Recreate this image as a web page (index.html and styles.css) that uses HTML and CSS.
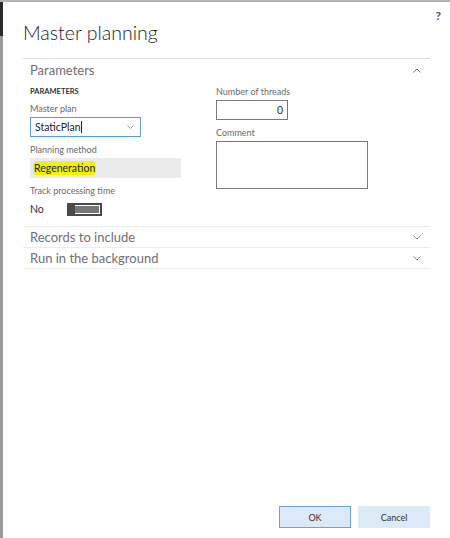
FILE: index.html
```html
<!DOCTYPE html>
<html>
<head>
<meta charset="utf-8">
<link rel="stylesheet" href="styles.css">
</head>
<body>
<div class="frame">
  <div class="leftbar"></div>
  <div class="dialog">
    <div class="help">?</div>
    <h1 class="title">Master planning</h1>
    <div class="section open">
      <div class="sec-head">
        <span>Parameters</span>
        <svg class="chev" width="8" height="5" viewBox="0 0 8 5"><path d="M0.5 4.5 L4 1 L7.5 4.5" fill="none" stroke="#777" stroke-width="1"/></svg>
      </div>
      <div class="sec-body">
        <div class="col">
          <div class="group">PARAMETERS</div>
          <div class="field">
            <div class="label">Master plan</div>
            <div class="combo"><span>StaticPlan<span class="caret"></span></span>
              <svg width="7" height="4" viewBox="0 0 7 4"><path d="M0.5 0.5 L3.5 3.5 L6.5 0.5" fill="none" stroke="#999" stroke-width="0.9"/></svg>
            </div>
          </div>
          <div class="field">
            <div class="label">Planning method</div>
            <div class="readonly"><span class="hl">Regeneration</span></div>
          </div>
          <div class="field">
            <div class="label">Track processing time</div>
            <div class="toggle-row"><span class="no">No</span><span class="toggle"><span class="knob"></span></span></div>
          </div>
        </div>
        <div class="col right">
          <div class="field">
            <div class="label">Number of threads</div>
            <div class="num">0</div>
          </div>
          <div class="field">
            <div class="label">Comment</div>
            <div class="textarea"></div>
          </div>
        </div>
      </div>
    </div>
    <div class="section">
      <div class="sec-head">
        <span>Records to include</span>
        <svg class="chev" width="8" height="5" viewBox="0 0 8 5"><path d="M0.5 0.5 L4 4 L7.5 0.5" fill="none" stroke="#888" stroke-width="1"/></svg>
      </div>
    </div>
    <div class="section">
      <div class="sec-head">
        <span>Run in the background</span>
        <svg class="chev" width="8" height="5" viewBox="0 0 8 5"><path d="M0.5 0.5 L4 4 L7.5 0.5" fill="none" stroke="#888" stroke-width="1"/></svg>
      </div>
    </div>
    <div class="spacer"></div>
    <div class="buttons">
      <button class="btn ok">OK</button>
      <button class="btn">Cancel</button>
    </div>
  </div>
</div>
</body>
</html>
```
FILE: styles.css
```css
html, body {
  margin: 0;
  padding: 0;
  background: #fff;
}
body {
  font-family: "Lato", "Open Sans", sans-serif;
  color: #333;
}
.frame {
  width: 450px;
  height: 538px;
  display: flex;
  border-top: 2px solid #b4b4b4;
  box-sizing: border-box;
  position: relative;
}
.leftbar {
  width: 3px;
  flex: none;
  background: linear-gradient(#2b2b2b 0, #2b2b2b 34px, #9a9a9a 34px, #9a9a9a 100%);
}
.dialog {
  flex: 1;
  display: flex;
  flex-direction: column;
  padding: 0 20px 10px 20px;
  position: relative;
}
.help {
  position: absolute;
  right: 9px;
  top: 6px;
  font-size: 12px;
  font-weight: 700;
  color: #555;
}
.title {
  margin: 0;
  font-weight: 300;
  font-size: 19.5px;
  color: #222;
  padding-top: 19px;
  height: 57px;
  box-sizing: border-box;
  line-height: 24px;
  border-bottom: 1px solid #dedede;
}
.section {
  border-bottom: 1px solid #ececec;
}
.section:last-of-type {
  border-bottom: none;
}
.sec-head {
  display: flex;
  align-items: center;
  justify-content: space-between;
  padding: 0 9px 0 7px;
  height: 20px;
  font-size: 13px;
  color: #707070;
}
.section.open .sec-head {
  height: 22px;
}
.sec-body {
  display: flex;
  padding: 0 7px 7px 7px;
}
.col {
  width: 186px;
  display: flex;
  flex-direction: column;
}
.group {
  font-size: 7.5px;
  font-weight: 700;
  color: #333;
  margin-top: 5px;
  height: 12px;
  line-height: 12px;
}
.field {
  display: flex;
  flex-direction: column;
}
.label {
  font-size: 9px;
  color: #6a6a6a;
  height: 12px;
  line-height: 12px;
  margin-top: 7px;
}
.group + .field .label {
  margin-top: 5px;
}
.col.right .field:first-child .label {
  margin-top: 5px;
}
.combo {
  width: 111px;
  height: 20px;
  box-sizing: border-box;
  border: 1px solid #5a9ad8;
  display: flex;
  align-items: center;
  justify-content: space-between;
  padding: 0 6px 0 4px;
  font-size: 10.5px;
  color: #222;
  margin-top: 2px;
}
.caret {
  display: inline-block;
  width: 1px;
  height: 12px;
  background: #222;
  vertical-align: -2px;
}
.readonly {
  width: 151px;
  height: 20px;
  background: #ebebeb;
  display: flex;
  align-items: center;
  padding-left: 4px;
  box-sizing: border-box;
  font-size: 10.5px;
  color: #222;
  margin-top: 2px;
}
.hl {
  background: #f1f20c;
  border-radius: 4px;
  padding: 1px 1px;
  margin-left: -1px;
}
.toggle-row {
  display: flex;
  align-items: center;
  height: 20px;
  margin-top: 2px;
}
.no {
  font-size: 10.5px;
  color: #333;
  width: 37px;
}
.toggle {
  width: 35px;
  height: 13px;
  box-sizing: border-box;
  background: #777;
  border: 2px solid #4a4a4a;
  display: block;
  position: relative;
  box-shadow: inset 0 0 0 1px #fff;
}
.knob {
  position: absolute;
  left: -2px;
  top: -2px;
  width: 8px;
  height: 13px;
  background: #4a4a4a;
}
.num {
  width: 72px;
  height: 20px;
  box-sizing: border-box;
  border: 1px solid #7a7a7a;
  text-align: right;
  font-size: 10.5px;
  line-height: 18px;
  padding-right: 4px;
  color: #333;
  margin-top: 2px;
}
.textarea {
  width: 152px;
  height: 48px;
  box-sizing: border-box;
  border: 1px solid #7a7a7a;
  margin-top: 2px;
}
.spacer {
  flex: 1;
}
.buttons {
  display: flex;
  justify-content: flex-end;
  gap: 7px;
}
.btn {
  width: 72px;
  height: 22px;
  background: #dce9f7;
  border: 1px solid #dce9f7;
  font-family: "Lato", "Open Sans", sans-serif;
  font-size: 9px;
  color: #333;
  padding: 0;
}
.btn.ok {
  border-color: #6fa3d8;
}
```
